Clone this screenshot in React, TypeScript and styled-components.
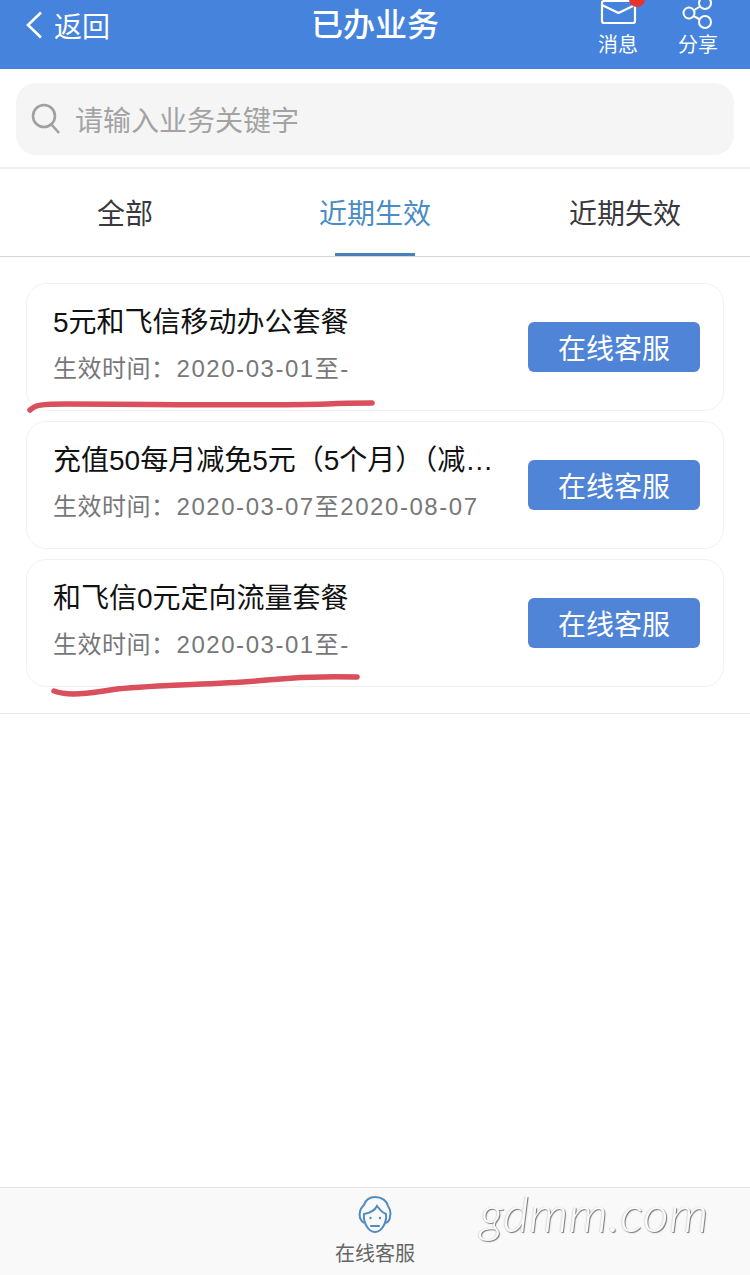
import React from 'react';
import styled, { createGlobalStyle } from 'styled-components';

const GlobalStyle = createGlobalStyle`
  html, body {
    margin: 0;
    padding: 0;
    background: #fff;
  }
  body {
    font-family: "Liberation Sans", "Noto Sans CJK SC", sans-serif;
  }
`;

const Page = styled.div`
  display: flex;
  flex-direction: column;
  height: 1275px;
  overflow: hidden;
`;

const Header = styled.header`
  align-items: flex-start;
  background-color: #4583dc;
  color: #fff;
  display: grid;
  flex: none;
  grid-template-columns: 1fr auto 1fr;
  height: 69px;
  overflow: hidden;
`;

const BackLink = styled.div`
  align-items: center;
  display: flex;
  font-size: 28px;
  gap: 9px;
  height: 50px;
  padding-left: 25px;
`;

const PageTitle = styled.h1`
  font-size: 32px;
  font-weight: 500;
  line-height: 50px;
  margin: 0;
`;

const HeaderActions = styled.div`
  display: flex;
  gap: 40px;
  justify-content: flex-end;
  padding-right: 32px;
`;

const HeaderAction = styled.div`
  align-items: center;
  display: flex;
  flex-direction: column;
  font-size: 20px;
  position: relative;
  width: 40px;
`;

const ActionIcon = styled.svg`
  display: block;
  flex: none;
  height: 32px;
  width: 40px;
`;

const ActionLabel = styled.span`
  line-height: 26px;
  white-space: nowrap;
`;

const RedDot = styled.span`
  background-color: #e8322d;
  border-radius: 50%;
  height: 16px;
  position: absolute;
  right: -7px;
  top: -9px;
  width: 16px;
`;

const SearchBar = styled.div`
  border-bottom: 2px solid #eeeeee;
  flex: none;
  padding: 14px 16px 12px;
`;

const SearchBox = styled.div`
  align-items: center;
  background-color: #f5f5f5;
  border-radius: 20px;
  color: #a3a3a3;
  display: flex;
  font-size: 28px;
  gap: 14px;
  height: 72px;
  padding-left: 15px;
`;

const Tabs = styled.nav`
  border-bottom: 1px solid #d4d4d4;
  display: grid;
  flex: none;
  grid-template-columns: 250px 250px 250px;
  height: 87px;
`;

const Tab = styled.div<{ $active?: boolean }>`
  align-items: center;
  color: ${({ $active }) => ($active ? '#4a8cc4' : '#38383d')};
  display: flex;
  font-size: 28px;
  justify-content: center;
  padding-bottom: 2px;
  position: relative;

  &::after {
    background-color: #4a80b8;
    bottom: 0;
    content: '';
    display: ${({ $active }) => ($active ? 'block' : 'none')};
    height: 3px;
    left: 85px;
    position: absolute;
    width: 80px;
  }
`;

const CardList = styled.section`
  border-bottom: 1px solid #e8e8e8;
  display: flex;
  flex: none;
  flex-direction: column;
  gap: 10px;
  padding: 26px 26px 26px;
`;

const Card = styled.article`
  align-items: center;
  border: 1px solid #f2f2f2;
  border-radius: 20px;
  box-sizing: border-box;
  display: flex;
  height: 128px;
  justify-content: space-between;
  padding: 0 23px 0 26px;
  position: relative;
`;

const CardText = styled.div`
  display: flex;
  flex-direction: column;
  gap: 9px;
  margin-top: -5px;
  width: 448px;
`;

const CardTitle = styled.div`
  color: #111;
  font-size: 28px;
  line-height: 40px;
  overflow: hidden;
  text-overflow: ellipsis;
  white-space: nowrap;
`;

const CardDate = styled.div`
  color: #77777a;
  font-size: 24px;
  letter-spacing: 0.5px;
  line-height: 34px;
  white-space: nowrap;
`;

const DateValue = styled.span`
  letter-spacing: 1.55px;
  margin-left: 1px;
`;

const ServiceButton = styled.button`
  background-color: #4f84d6;
  border: 0;
  border-radius: 6px;
  color: #fff;
  flex: none;
  font-family: inherit;
  font-size: 28px;
  height: 50px;
  padding: 0;
  width: 172px;
`;

const PenMark = styled.svg`
  height: 100%;
  left: 0;
  overflow: visible;
  pointer-events: none;
  position: absolute;
  top: 0;
  width: 100%;
`;

const Spacer = styled.div`
  flex: 1;
`;

const Footer = styled.footer`
  align-items: center;
  background-color: #f9f9f9;
  border-top: 1px solid #e4e4e4;
  box-sizing: border-box;
  color: #666;
  display: flex;
  flex: none;
  flex-direction: column;
  font-size: 20px;
  height: 88px;
  padding-top: 8px;
  position: relative;
`;

const FooterLabel = styled.span`
  line-height: 28px;
  margin-top: 6px;
`;

const Watermark = styled.span`
  color: #fafafa;
  font-family: Lato, sans-serif;
  font-size: 50px;
  font-style: italic;
  font-weight: 300;
  left: 480px;
  letter-spacing: 0.5px;
  line-height: 50px;
  position: absolute;
  text-shadow: 1px 1px 1px #777, -1px 0 1px #ddd;
  top: 0;
`;

const items = [
  {
    title: '5元和飞信移动办公套餐',
    date: '2020-03-01至-',
    mark: 'M3 126 C8 121 14 120 40 120 C120 120 230 122 300 120 C320 119 335 119 345 119',
  },
  {
    title: '充值50每月减免5元（5个月）（减免5元）',
    date: '2020-03-07至2020-08-07',
  },
  {
    title: '和飞信0元定向流量套餐',
    date: '2020-03-01至-',
    mark: 'M27 131 C40 136 60 134 90 129 C140 124 190 125 240 120 C270 117 300 116 330 117',
  },
];

export default function App() {
  return (
    <Page>
      <GlobalStyle />
      <Header>
        <BackLink>
          <svg width="20" height="28" viewBox="0 0 20 28" fill="none" stroke="#fff" strokeWidth="2.6">
            <path d="M16 1.5 L3 14 L16 26.5" />
          </svg>
          返回
        </BackLink>
        <PageTitle>已办业务</PageTitle>
        <HeaderActions>
          <HeaderAction>
            <ActionIcon viewBox="0 0 40 32" fill="none" stroke="#fff" strokeWidth="2.2">
              <path d="M6 1 H35 Q37 1 37 3 V21 Q37 23 35 23 H6 Q4 23 4 21 V3 Q4 1 6 1 Z" />
              <path d="M4 5 L20.5 13 L37 5" />
            </ActionIcon>
            <RedDot />
            <ActionLabel>消息</ActionLabel>
          </HeaderAction>
          <HeaderAction>
            <ActionIcon viewBox="0 0 40 32" fill="none" stroke="#fff" strokeWidth="2">
              <circle cx="27" cy="3" r="6" />
              <circle cx="11" cy="13" r="5.5" />
              <circle cx="27" cy="22" r="6" />
              <path d="M22 6.5 L15.5 10.5 M15.5 16 L22 19.5" />
            </ActionIcon>
            <ActionLabel>分享</ActionLabel>
          </HeaderAction>
        </HeaderActions>
      </Header>

      <SearchBar>
        <SearchBox>
          <svg width="30" height="32" viewBox="0 0 30 32" fill="none" stroke="#a0a0a0" strokeWidth="2.6">
            <circle cx="13" cy="13" r="11" />
            <path d="M20.5 21.5 L28 30" />
          </svg>
          请输入业务关键字
        </SearchBox>
      </SearchBar>

      <Tabs>
        <Tab>全部</Tab>
        <Tab $active>近期生效</Tab>
        <Tab>近期失效</Tab>
      </Tabs>

      <CardList>
        {items.map((item) => (
          <Card key={item.title}>
            <CardText>
              <CardTitle>{item.title}</CardTitle>
              <CardDate>
                生效时间：<DateValue>{item.date}</DateValue>
              </CardDate>
            </CardText>
            <ServiceButton>在线客服</ServiceButton>
            {item.mark && (
              <PenMark>
                <path d={item.mark} fill="none" stroke="#d94f5c" strokeWidth="5.5" strokeLinecap="round" />
              </PenMark>
            )}
          </Card>
        ))}
      </CardList>

      <Spacer />

      <Footer>
        <svg width="34" height="38" viewBox="0 0 34 38" fill="none" stroke="#4f8cc0" strokeWidth="2">
          <path d="M6 27 C2 24 1 20 2 16 C2 13 4 11 6 9 C7 4 12 1 17 1 C24 1 29 5 30 10 C32 13 33 17 32 20 C32 23 30 26 28 27" />
          <path d="M6 18 C12 17 17 14 19 10 C22 14 25 17 28 18 C29 26 24 36 17 36 C10 36 5 26 6 18 Z" />
          <circle cx="12.5" cy="22" r="1.2" fill="#4f8cc0" stroke="none" />
          <circle cx="22" cy="22" r="1.2" fill="#4f8cc0" stroke="none" />
          <path d="M13 30 H21" strokeLinecap="round" />
        </svg>
        <FooterLabel>在线客服</FooterLabel>
        <Watermark>gdmm.com</Watermark>
      </Footer>
    </Page>
  );
}
